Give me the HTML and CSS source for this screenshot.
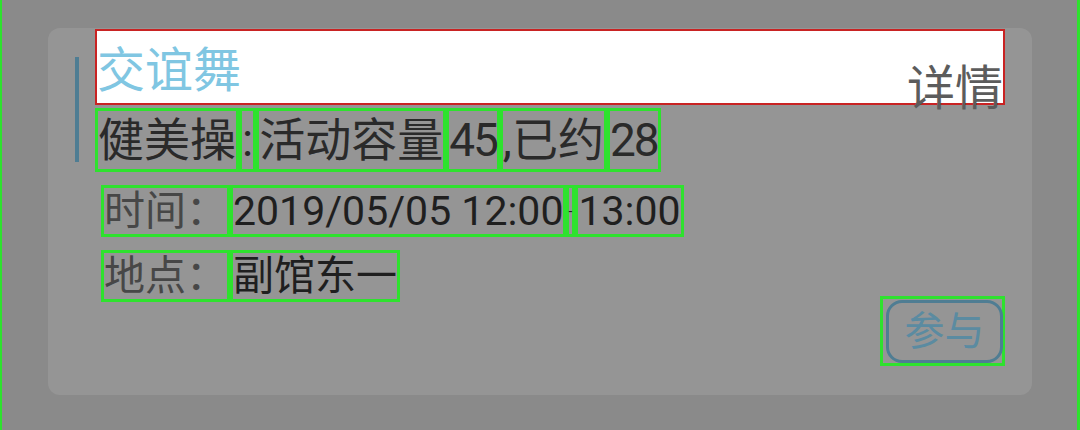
FILE: index.html
```html
<!DOCTYPE html>
<html lang="zh">
<head>
<meta charset="utf-8">
<link rel="stylesheet" href="styles.css">
</head>
<body>
<div class="screen">
  <div class="card">
    <div class="accent"></div>
    <div class="content">
      <div class="title-box">
        <span class="title">交谊舞</span>
        <span class="detail">详情</span>
      </div>
      <div class="row row-main">
        <span class="box">健美操</span><span class="box colon">:</span><span class="box">活动容量</span><span class="box num">45</span><span class="box">,已约</span><span class="box num">28</span>
      </div>
      <div class="row row-info">
        <span class="box label">时间：</span><span class="box value">2019/05/05 12:00</span><span class="box dash">-</span><span class="box value">13:00</span>
      </div>
      <div class="row row-info">
        <span class="box label">地点：</span><span class="box value">副馆东一</span>
      </div>
      <div class="actions">
        <span class="box btn-wrap"><button class="join">参与</button></span>
      </div>
    </div>
  </div>
</div>
</body>
</html>
```

FILE: styles.css
```css
html, body {
  margin: 0;
  padding: 0;
  background: #8a8a8a;
}

body {
  font-family: Roboto, "Noto Sans CJK SC", sans-serif;
}

.screen {
  box-sizing: border-box;
  width: 1080px;
  height: 430px;
  border-left: 2px solid #2ee22e;
  border-right: 3px solid #2ee22e;
  padding: 28px 0 0 46px;
}

.card {
  box-sizing: border-box;
  width: 984px;
  height: 367px;
  background: #959595;
  border-radius: 12px;
  display: flex;
  align-items: flex-start;
}

.accent {
  width: 4px;
  height: 105px;
  margin: 29px 0 0 27px;
  background: #4f7d93;
  flex: none;
}

.content {
  width: 910px;
  margin: 1px 0 0 16px;
  display: flex;
  flex-direction: column;
}

.title-box {
  box-sizing: border-box;
  height: 76px;
  background: #ffffff;
  border: 2px solid #c92323;
  display: flex;
  justify-content: space-between;
  align-items: flex-start;
}

.title {
  font-size: 48px;
  line-height: normal;
  color: #80c6e2;
}

.detail {
  font-size: 48px;
  line-height: normal;
  color: #5c5c5c;
  margin-top: 18px;
}

.row {
  display: flex;
  align-items: flex-start;
}

.box {
  box-sizing: border-box;
  border: 3px solid #2ee22e;
  white-space: pre;
  display: block;
}

.row-main {
  margin-top: 3px;
}

.row-main .box {
  height: 64px;
  font-size: 46px;
  line-height: 58px;
  color: #2a2a2a;
}

.row-main .num {
  letter-spacing: -2px;
}

.row-info {
  margin: 13px 0 0 6px;
}

.row-info .box {
  height: 52px;
  font-size: 41px;
  line-height: 46px;
}

.row-info .label {
  color: #474747;
}

.row-info .value {
  color: #1f1f1f;
}

.row-info .dash {
  width: 9px;
  font-size: 14px;
  line-height: 46px;
  color: #1f1f1f;
  overflow: visible;
  text-indent: -1px;
}

.actions {
  display: flex;
  justify-content: flex-end;
  margin-top: -6px;
}

.btn-wrap {
  width: 125px;
  height: 70px;
  padding: 1px 0 0 3px;
}

.join {
  box-sizing: border-box;
  display: block;
  width: 117px;
  height: 63px;
  margin: 0;
  padding: 0;
  border: 3px solid #4f7d93;
  border-radius: 16px;
  background: transparent;
  font-family: Roboto, "Noto Sans CJK SC", sans-serif;
  font-size: 40px;
  line-height: 57px;
  color: #5b8ba1;
}
```
